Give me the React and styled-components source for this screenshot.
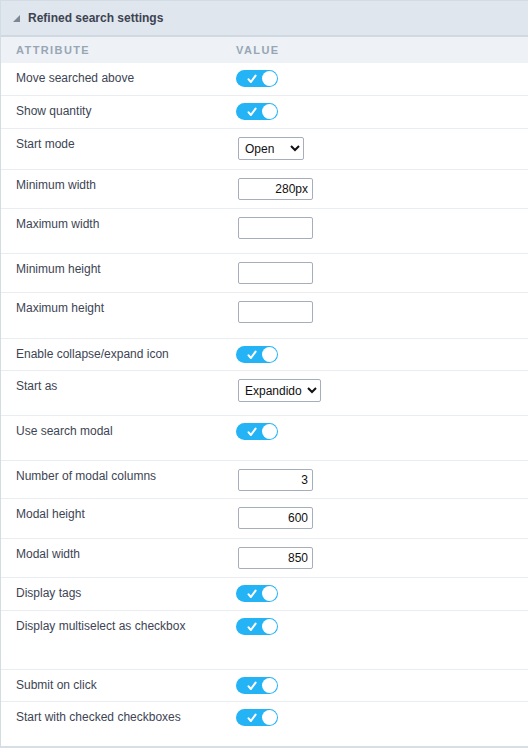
import React from "react";
import styled, { createGlobalStyle } from "styled-components";

const Global = createGlobalStyle`
  html, body { margin: 0; padding: 0; background: #fff; }
  body { font-family: "Liberation Sans", Arial, sans-serif; }
  * { box-sizing: border-box; }
`;

const Panel = styled.div`
  width: 528px;
  border-left: 1px solid #d3dbe3;
  border-top: 1px solid #d3dbe3;
  border-bottom: 2px solid #d6dee6;
  background: #fff;
`;

const Header = styled.div`
  height: 36px;
  background: #e0e6ed;
  border-bottom: 2px solid #d0d9e1;
  display: flex;
  align-items: center;
  padding-left: 12px;
  gap: 8px;
`;

const Caret = styled.span`
  width: 0;
  height: 0;
  border-left: 7px solid transparent;
  border-bottom: 7px solid #7d8794;
  margin-top: 1px;
`;

const Title = styled.span`
  font-size: 12px;
  font-weight: bold;
  color: #3d4352;
`;

const ColHead = styled.div`
  height: 26px;
  background: #eef2f6;
  display: grid;
  grid-template-columns: 220px 1fr;
  align-items: center;
  padding-left: 15px;
  font-size: 11px;
  font-weight: bold;
  letter-spacing: 1.4px;
  color: #97a6b5;
`;

const Row = styled.div`
  height: ${(p) => p.$h + 1}px;
  border-bottom: 1px solid ${(p) => (p.$last ? "transparent" : "#e9edf2")};
  display: grid;
  grid-template-columns: 220px 1fr;
  padding-left: 15px;
  align-items: start;
`;

const Label = styled.div`
  font-size: 12px;
  line-height: 14px;
  padding-top: 8px;
  color: #3e4454;
`;

const Cell = styled.div`
  padding-top: ${(p) => p.$top}px;
`;

const Toggle = styled.div`
  width: 42px;
  height: 17px;
  border-radius: 9px;
  background: #24b3f5;
  position: relative;
  display: flex;
  align-items: center;
  padding-left: 11px;
`;

const Knob = styled.span`
  position: absolute;
  right: 1px;
  top: 1px;
  width: 15px;
  height: 15px;
  border-radius: 50%;
  background: #fff;
`;

const TextInput = styled.input`
  width: 75px;
  height: 22px;
  margin-left: 2px;
  border: 1px solid #a7aebb;
  border-radius: 2px;
  font-family: "Liberation Sans", Arial, sans-serif;
  font-size: 12px;
  text-align: right;
  padding: 0 4px;
  color: #111;
  outline: none;
`;

const Select = styled.select`
  width: ${(p) => p.$w}px;
  height: 23px;
  margin-left: 2px;
  border: 1px solid #a7aebb;
  border-radius: 2px;
  font-family: "Liberation Sans", Arial, sans-serif;
  font-size: 12px;
  color: #111;
  background: #fff;
  padding: 0 2px;
`;

function Switch() {
  return (
    <Toggle>
      <svg width="10" height="10" viewBox="0 0 10 10">
        <path d="M1.6 5.4 L3.9 8 L8.6 1.6" fill="none" stroke="#fff" strokeWidth="2.1" strokeLinecap="round" strokeLinejoin="round" />
      </svg>
      <Knob />
    </Toggle>
  );
}

const rows = [
  { label: "Move searched above", kind: "toggle", h: 32 },
  { label: "Show quantity", kind: "toggle", h: 32 },
  { label: "Start mode", kind: "select", options: ["Open", "Closed"], w: 66, h: 40 },
  { label: "Minimum width", kind: "input", value: "280px", h: 38 },
  { label: "Maximum width", kind: "input", value: "", h: 44 },
  { label: "Minimum height", kind: "input", value: "", h: 38 },
  { label: "Maximum height", kind: "input", value: "", h: 45 },
  { label: "Enable collapse/expand icon", kind: "toggle", h: 31 },
  { label: "Start as", kind: "select", options: ["Expandido", "Recolhido"], w: 83, h: 44 },
  { label: "Use search modal", kind: "toggle", h: 44 },
  { label: "Number of modal columns", kind: "input", value: "3", h: 37 },
  { label: "Modal height", kind: "input", value: "600", h: 39 },
  { label: "Modal width", kind: "input", value: "850", h: 38 },
  { label: "Display tags", kind: "toggle", h: 32 },
  { label: "Display multiselect as checkbox", kind: "toggle", h: 58 },
  { label: "Submit on click", kind: "toggle", h: 31 },
  { label: "Start with checked checkboxes", kind: "toggle", h: 43 },
];

export default function App() {
  return (
    <>
      <Global />
      <Panel>
        <Header>
          <Caret />
          <Title>Refined search settings</Title>
        </Header>
        <ColHead>
          <span>ATTRIBUTE</span>
          <span>VALUE</span>
        </ColHead>
        {rows.map((r, i) => (
          <Row key={r.label} $h={r.h} $last={i === rows.length - 1}>
            <Label>{r.label}</Label>
            {r.kind === "toggle" && (
              <Cell $top={7}>
                <Switch />
              </Cell>
            )}
            {r.kind === "input" && (
              <Cell $top={8}>
                <TextInput defaultValue={r.value} />
              </Cell>
            )}
            {r.kind === "select" && (
              <Cell $top={8}>
                <Select $w={r.w} defaultValue={r.options[0]}>
                  {r.options.map((o) => (
                    <option key={o}>{o}</option>
                  ))}
                </Select>
              </Cell>
            )}
          </Row>
        ))}
      </Panel>
    </>
  );
}
